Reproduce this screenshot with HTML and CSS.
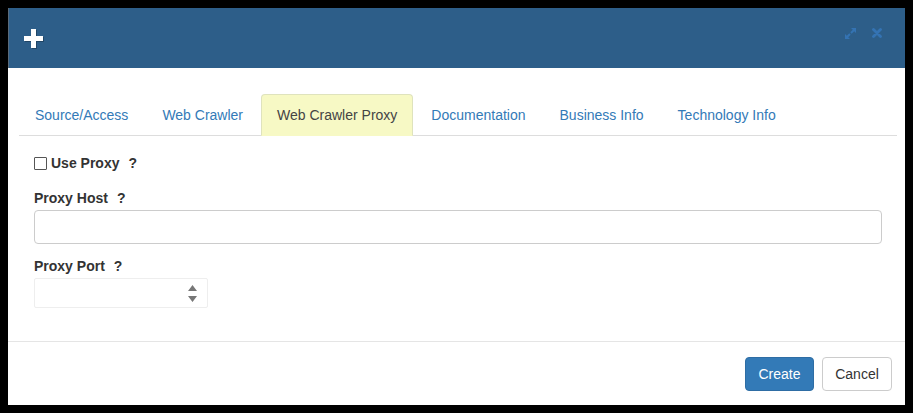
FILE: index.html
```html
<!DOCTYPE html>
<html>
<head>
<meta charset="utf-8">
<link rel="stylesheet" href="styles.css">
</head>
<body>
<div class="dialog">
  <div class="header">
    <svg class="plus" width="19" height="19" viewBox="0 0 19 19"><path d="M7 0h5v7h7v5h-7v7h-5v-7h-7v-5h7z" fill="#fff"/></svg>
    <div class="tools">
      <svg class="expand" width="13" height="13" viewBox="0 0 13 13"><path d="M7 1h5v5l-1.8-1.8-2.5 2.5-1.4-1.4 2.5-2.5z M6 12h-5v-5l1.8 1.8 2.5-2.5 1.4 1.4-2.5 2.5z" fill="#3576b8"/></svg>
      <svg class="close" width="10" height="10" viewBox="0 0 10 10"><path d="M1.5 1.5l7 7M8.5 1.5l-7 7" stroke="#3576b8" stroke-width="2.8" stroke-linecap="round"/></svg>
    </div>
  </div>
  <div class="body">
    <ul class="tabs">
      <li><a>Source/Access</a></li>
      <li><a>Web Crawler</a></li>
      <li class="active"><a>Web Crawler Proxy</a></li>
      <li><a>Documentation</a></li>
      <li><a>Business Info</a></li>
      <li><a>Technology Info</a></li>
    </ul>
    <div class="pane">
      <div class="check-row"><span class="box"></span><span class="lbl">Use Proxy</span><span class="help">?</span></div>
      <div class="field">
        <div class="lbl-line"><span class="lbl">Proxy Host</span><span class="help">?</span></div>
        <div class="input"></div>
      </div>
      <div class="field">
        <div class="lbl-line"><span class="lbl">Proxy Port</span><span class="help">?</span></div>
        <div class="num">
          <svg class="spin" width="9" height="17" viewBox="0 0 9 17"><path d="M4.5 0L9 6H0z M0 11h9L4.5 17z" fill="#777"/></svg>
        </div>
      </div>
    </div>
  </div>
  <div class="footer">
    <button class="btn primary">Create</button>
    <button class="btn">Cancel</button>
  </div>
</div>
</body>
</html>
```

FILE: styles.css
```css
html, body {
  margin: 0;
  padding: 0;
  background: #000;
}
body {
  font-family: "Liberation Sans", Arial, sans-serif;
  font-size: 14px;
  color: #333;
  padding: 8px 0 0 8px;
}
.dialog {
  width: 897px;
  height: 397px;
  background: #fff;
  display: flex;
  flex-direction: column;
}
.header {
  height: 60px;
  background: #2d5e89;
  display: flex;
  align-items: center;
  padding-left: 15px;
  padding-right: 23px;
  border-left: 1px solid #5a6a7a;
}
.plus {
  filter: drop-shadow(1px 1px 0 rgba(0,0,0,0.25));
}
.tools {
  margin-left: auto;
  display: flex;
  align-items: center;
  gap: 15px;
  margin-top: -10px;
  opacity: 0.9;
}
.body {
  flex: 1;
  padding: 26px 8px 0 11px;
}
.tabs {
  list-style: none;
  margin: 0;
  padding: 0;
  display: flex;
  border-bottom: 1px solid #ddd;
}
.tabs li {
  margin-right: 2px;
  margin-bottom: -1px;
}
.tabs a {
  display: block;
  padding: 10px 15px;
  line-height: 20px;
  border: 1px solid transparent;
  border-radius: 4px 4px 0 0;
  color: #337ab7;
}
.tabs .active a {
  background: #f7f9c5;
  border-color: #dfe3bd #dfe3bd transparent;
  color: #444;
}
.pane {
  padding: 17px 15px 0 15px;
}
.check-row {
  display: flex;
  align-items: center;
  height: 20px;
  line-height: 20px;
}
.box {
  width: 11px;
  height: 11px;
  border: 1px solid #555;
  border-radius: 1px;
  margin-right: 4px;
  margin-top: 1px;
}
.lbl {
  font-weight: bold;
  color: #333;
}
.help {
  font-weight: bold;
  margin-left: 9px;
  color: #333;
}
.field {
  margin-top: 15px;
}
.field + .field {
  margin-top: 12px;
}
.lbl-line {
  line-height: 20px;
  height: 20px;
}
.input {
  margin-top: 2px;
  height: 32px;
  border: 1px solid #ccc;
  border-radius: 4px;
}
.num {
  margin-top: 2px;
  width: 171px;
  height: 28px;
  border: 1px solid #eee;
  border-radius: 2px;
  display: flex;
  align-items: center;
  justify-content: flex-end;
  padding-right: 1px;
}
.spin {
  margin-right: 9px;
}
.footer {
  border-top: 1px solid #e5e5e5;
  padding: 15px 13px 14px 15px;
  display: flex;
  justify-content: flex-end;
  gap: 8px;
}
.btn {
  font-family: "Liberation Sans", Arial, sans-serif;
  font-size: 14px;
  line-height: 20px;
  padding: 6px 12px;
  border: 1px solid #ccc;
  border-radius: 4px;
  background: #fff;
  color: #333;
  width: 70px;
}
.btn.primary {
  background: #337ab7;
  border-color: #2e6da4;
  color: #fff;
  width: 69px;
}
```
